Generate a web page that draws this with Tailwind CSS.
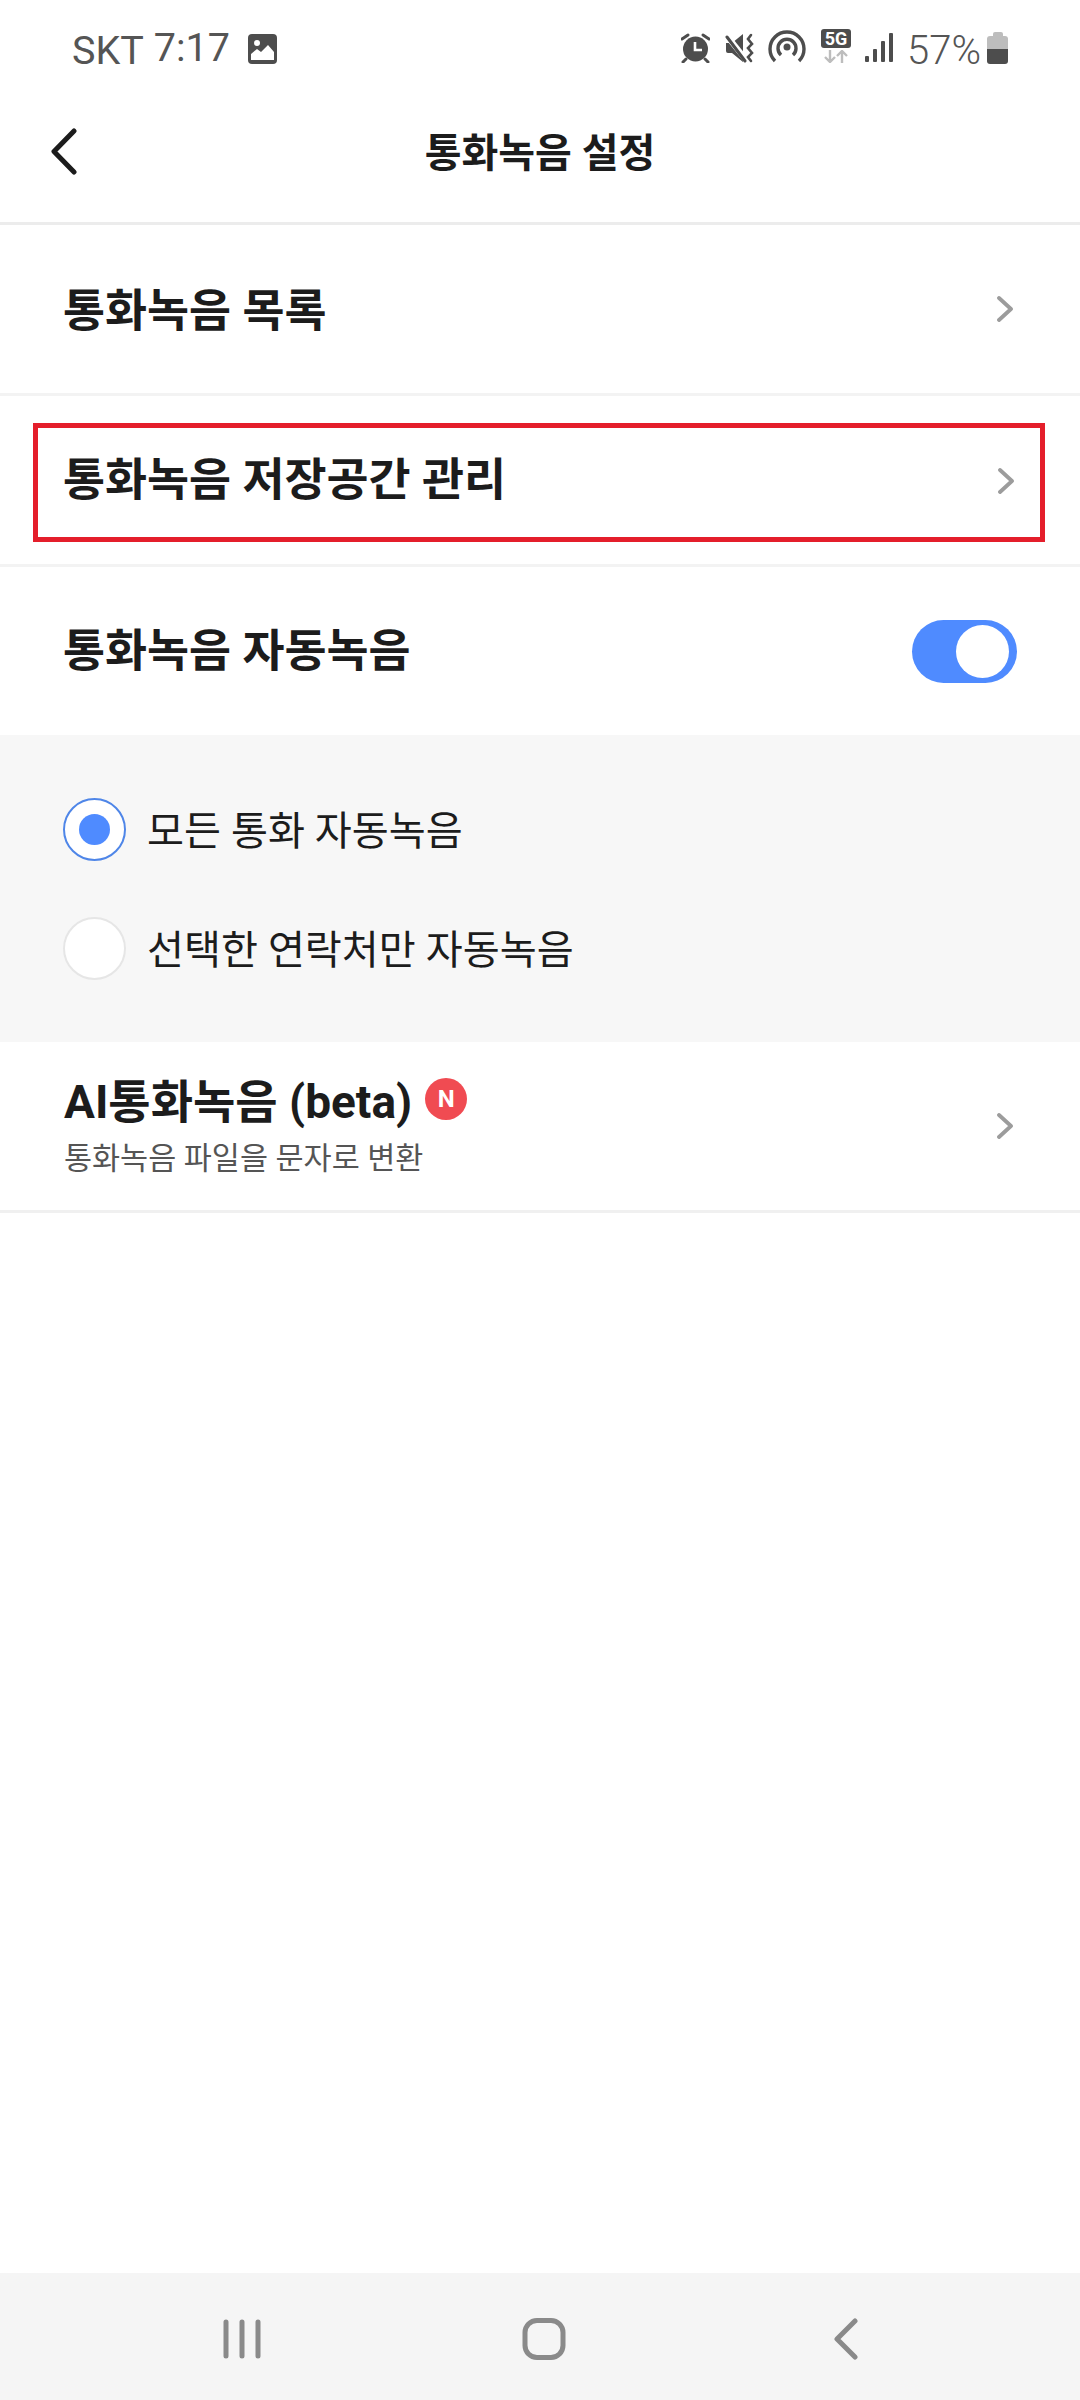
<!DOCTYPE html>
<html lang="ko">
<head>
    <meta charset="UTF-8" />
    <meta name="viewport" content="width=device-width, initial-scale=1.0"/>
    <title>통화녹음 설정</title>
    <script src="https://cdn.jsdelivr.net/npm/@tailwindcss/browser@4"></script>
</head>
<body class="bg-white">
<div class="w-[1080px] h-[2400px] flex flex-col bg-white text-[#1c1c1c] font-['Roboto','Noto_Sans_CJK_KR',sans-serif]">

    <!-- Status bar -->
    <div class="h-[70px] shrink-0 flex items-start justify-between pt-[27px] pl-[72px] pr-[72px] text-[#555555] text-[39.5px] leading-[44px]">
        <div class="flex items-start">
            <span class="mt-[2px]">SKT</span>
            <span class="ml-[10px] -mt-[1px]">7:17</span>
            <svg class="ml-[18px] mt-[7px]" width="29" height="30" viewBox="0 0 29 30">
                <rect width="29" height="30" rx="4" fill="#4d4d4d"/>
                <circle cx="9" cy="9" r="3" fill="#fff"/>
                <path d="M3 26v-6l6-5 4 3 7-7 6 7v8z" fill="#fff"/>
            </svg>
        </div>
        <div class="flex items-start">
            <!-- alarm -->
            <svg class="mt-[6px]" width="29" height="30" viewBox="0 0 29 30" fill="#4d4d4d">
                <circle cx="14.5" cy="16" r="12.5"/>
                <path d="M14 9v8h7" fill="none" stroke="#fff" stroke-width="2.6"/>
                <path d="M1 6l6-4M28 6l-6-4M5 26l-3 3M24 26l3 3" fill="none" stroke="#4d4d4d" stroke-width="3" stroke-linecap="round"/>
            </svg>
            <!-- mute vibrate -->
            <svg class="ml-[15px] mt-[6px]" width="30" height="30" viewBox="0 0 30 30" fill="#4d4d4d">
                <path d="M1 10h6l11-9v28l-11-9H3q-2 0-2-2z"/>
                <path d="M2 3l20 25" stroke="#fff" stroke-width="6"/>
                <path d="M2 4l18 24" stroke="#4d4d4d" stroke-width="3" stroke-linecap="round"/>
                <path d="M26 2l-3 4 4 5-4 4 4 5-4 4 3 4" fill="none" stroke="#4d4d4d" stroke-width="2.6" stroke-linecap="round"/>
            </svg>
            <!-- hotspot -->
            <svg class="ml-[13px] mt-[3px]" width="38" height="33" viewBox="0 0 38 33" fill="none" stroke="#4d4d4d" stroke-width="3.4">
                <path d="M7 31a17 17 0 1 1 24 0"/>
                <path d="M13 25a9 9 0 1 1 12 0"/>
                <circle cx="19" cy="17" r="3.5" fill="#4d4d4d" stroke="none"/>
            </svg>
            <!-- 5G -->
            <div class="ml-[15px] flex flex-col items-center w-[30px]">
                <span class="w-[30px] h-[19px] mt-[2px] rounded-[3px] bg-[#4d4d4d] text-white text-[18px] leading-[19px] font-bold text-center">5G</span>
                <svg class="mt-[2px]" width="24" height="13" viewBox="0 0 24 13" fill="none" stroke="#bdbdbd" stroke-width="2.4">
                    <path d="M6 0v12M1 7l5 5 5-5M18 13V1M13 6l5-5 5 5"/>
                </svg>
            </div>
            <!-- signal -->
            <svg class="ml-[14px] mt-[6px]" width="28" height="29" viewBox="0 0 28 29" fill="#4d4d4d">
                <rect x="0" y="23" width="4" height="6" rx="1"/>
                <rect x="8" y="16" width="4" height="13" rx="1"/>
                <rect x="16" y="8" width="4" height="21" rx="1"/>
                <rect x="24" y="0" width="4" height="29" rx="1"/>
            </svg>
            <span class="ml-[14px] mt-[2px] text-[40px] leading-[44px] font-light">57%</span>
            <!-- battery -->
            <div class="ml-[6px] mt-[5px] flex flex-col items-center w-[21px]">
                <span class="w-[10px] h-[4px] rounded-t-[2px] bg-[#bdbdbd]"></span>
                <span class="w-[21px] h-[13px] rounded-t-[3px] bg-[#bdbdbd]"></span>
                <span class="w-[21px] h-[15px] rounded-b-[3px] bg-[#4d4d4d]"></span>
            </div>
        </div>
    </div>

    <!-- Header -->
    <header class="h-[155px] shrink-0 relative flex items-center justify-center border-b-[3px] border-[#ececec] pt-[15px]">
        <svg class="absolute left-[50px] top-[58px]" width="28" height="47" viewBox="0 0 28 47" fill="none" stroke="#1c1c1c" stroke-width="5" stroke-linecap="round" stroke-linejoin="round">
            <path d="M24 3L4 23.500L24 44"/>
        </svg>
        <h1 class="text-[40px] leading-[48px] font-bold">통화녹음 설정</h1>
    </header>

    <!-- Recording list -->
    <div class="h-[171px] shrink-0 flex items-center justify-between pl-[63px] pr-[66px] border-b-[3px] border-[#f3f3f3]">
        <span class="text-[45.7px] leading-[56px] font-bold pt-[6px]">통화녹음 목록</span>
        <svg width="17" height="26" viewBox="0 0 17 26" fill="none" stroke="#9c9c9c" stroke-width="3.800" stroke-linecap="round" stroke-linejoin="round"><path d="M2 2l12 11L2 24"/></svg>
    </div>

    <!-- Storage, highlighted -->
    <div class="h-[171px] shrink-0 pt-[27px] pl-[33px] pr-[35px] border-b-[3px] border-[#f3f3f3]">
        <div class="h-[119px] border-[5px] border-[#e41e2b] flex items-center justify-between pl-[25px] pr-[25px] pb-[4px]">
            <span class="text-[45.7px] leading-[56px] font-bold">통화녹음 저장공간 관리</span>
            <svg width="17" height="26" viewBox="0 0 17 26" fill="none" stroke="#9c9c9c" stroke-width="3.800" stroke-linecap="round" stroke-linejoin="round"><path d="M2 2l12 11L2 24"/></svg>
        </div>
    </div>

    <!-- Auto record toggle -->
    <div class="h-[168px] shrink-0 flex items-center justify-between pl-[63px] pr-[63px]">
        <span class="text-[45.7px] leading-[56px] font-bold pt-[2px]">통화녹음 자동녹음</span>
        <div class="w-[105px] h-[63px] rounded-full bg-[#4f8bff] flex items-center justify-end pr-[8px]">
            <span class="w-[53px] h-[53px] rounded-full bg-white"></span>
        </div>
    </div>

    <!-- Auto record options -->
    <div class="h-[307px] shrink-0 bg-[#f7f7f7] flex flex-col pt-[63px] pl-[63px] gap-[56px]">
        <div class="flex items-center gap-[21px]">
            <span class="w-[63px] h-[63px] rounded-full bg-white border-[2.5px] border-[#4f86e8] flex items-center justify-center">
                <span class="w-[31px] h-[31px] rounded-full bg-[#4f8bff]"></span>
            </span>
            <span class="text-[40.2px] leading-[48px] pt-[5px]">모든 통화 자동녹음</span>
        </div>
        <div class="flex items-center gap-[21px]">
            <span class="w-[63px] h-[63px] rounded-full bg-white border-[2.5px] border-[#e6e6e6]"></span>
            <span class="text-[40.2px] leading-[48px] pt-[5px]">선택한 연락처만 자동녹음</span>
        </div>
    </div>

    <!-- AI recording -->
    <div class="h-[171px] shrink-0 flex items-center justify-between pl-[64px] pr-[66px] border-b-[3px] border-[#f0f0f0]">
        <div class="flex flex-col">
            <div class="flex items-center">
                <span class="text-[46px] leading-[56px] font-bold">AI통화녹음 (beta)</span>
                <span class="ml-[13px] mb-[5px] w-[42px] h-[42px] rounded-full bg-[#f04b52] text-white text-[24px] font-bold flex items-center justify-center">N</span>
            </div>
            <span class="mt-[9px] text-[30.5px] leading-[40px] text-[#555555]">통화녹음 파일을 문자로 변환</span>
        </div>
        <svg width="17" height="26" viewBox="0 0 17 26" fill="none" stroke="#9c9c9c" stroke-width="3.800" stroke-linecap="round" stroke-linejoin="round"><path d="M2 2l12 11L2 24"/></svg>
    </div>

    <div class="flex-1"></div>

    <!-- Navigation bar -->
    <nav class="h-[127px] shrink-0 bg-[#f5f5f5]">
        <div class="h-full flex items-center justify-between pl-[222px] pr-[222px] pt-[5px]">
            <svg width="40" height="40" viewBox="0 0 40 40" stroke="#8a8a8a" stroke-width="5" stroke-linecap="round"><path d="M4 3v34M20 3v34M36 3v34"/></svg>
            <svg class="mr-[8px]" width="44" height="42" viewBox="0 0 44 42" fill="none" stroke="#8a8a8a" stroke-width="5"><rect x="3" y="2.500" width="38" height="37" rx="12"/></svg>
            <svg width="24" height="42" viewBox="0 0 24 42" fill="none" stroke="#8a8a8a" stroke-width="5" stroke-linecap="round" stroke-linejoin="round"><path d="M21 3L3 21l18 18"/></svg>
        </div>
    </nav>
</div>
</body>
</html>
